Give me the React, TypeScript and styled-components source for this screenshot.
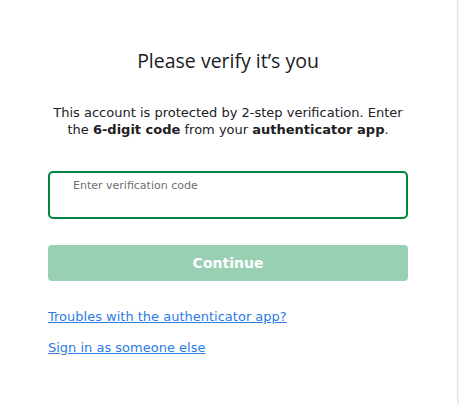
import React, { useState } from "react";
import styled, { createGlobalStyle } from "styled-components";

const GlobalStyle = createGlobalStyle`
  html, body {
    margin: 0;
    padding: 0;
    background: #f4f4f4;
  }
  * {
    box-sizing: border-box;
  }
`;

const Panel = styled.main`
  width: 458px;
  height: 404px;
  background: #ffffff;
  border-right: 1px solid #e2e2e2;
  padding: 47px 49px 0 48px;
  display: flex;
  flex-direction: column;
  font-family: "DejaVu Sans", Verdana, sans-serif;
  color: #21201f;
`;

const Title = styled.h1`
  margin: 0;
  text-align: center;
  font-family: "Open Sans", "Noto Sans", sans-serif;
  font-size: 19.5px;
  font-weight: 500;
  line-height: 28px;
  color: #1a1a22;
`;

const Lead = styled.p`
  margin: 29px 0 0;
  text-align: center;
  font-size: 13px;
  line-height: 17px;

  b {
    font-weight: bold;
  }
`;

const Field = styled.label`
  margin-top: 33px;
  height: 48px;
  border: 2px solid #00853f;
  border-radius: 5px;
  padding: 6px 23px 0;
  display: flex;
  flex-direction: column;
`;

const FieldLabel = styled.span`
  font-size: 11px;
  line-height: 14px;
  color: #6b6f76;
`;

const FieldInput = styled.input`
  border: none;
  outline: none;
  padding: 0;
  font: inherit;
  font-size: 14px;
  background: transparent;
`;

const Button = styled.button<{ $disabled?: boolean }>`
  margin-top: 26px;
  height: 36px;
  border: none;
  border-radius: 4px;
  background: ${(p) => (p.$disabled ? "#99d0b3" : "#00853f")};
  color: #ffffff;
  font-family: "DejaVu Sans", Verdana, sans-serif;
  font-size: 14px;
  font-weight: bold;
  cursor: pointer;
`;

const Links = styled.nav`
  margin-top: 27px;
  display: flex;
  flex-direction: column;
  align-items: flex-start;
  gap: 14px;
`;

const LinkItem = styled.a`
  font-size: 13px;
  line-height: 17px;
  color: #2c7be5;
  text-decoration: underline;
`;

export default function App() {
  const [code, setCode] = useState("");

  return (
    <>
      <GlobalStyle />
      <Panel>
        <Title>Please verify it’s you</Title>
        <Lead>
          This account is protected by 2-step verification. Enter the <b>6-digit code</b> from your{" "}
          <b>authenticator app</b>.
        </Lead>
        <Field>
          <FieldLabel>Enter verification code</FieldLabel>
          <FieldInput value={code} onChange={(e) => setCode(e.target.value)} />
        </Field>
        <Button $disabled={code.length < 6}>Continue</Button>
        <Links>
          <LinkItem href="#">Troubles with the authenticator app?</LinkItem>
          <LinkItem href="#">Sign in as someone else</LinkItem>
        </Links>
      </Panel>
    </>
  );
}
